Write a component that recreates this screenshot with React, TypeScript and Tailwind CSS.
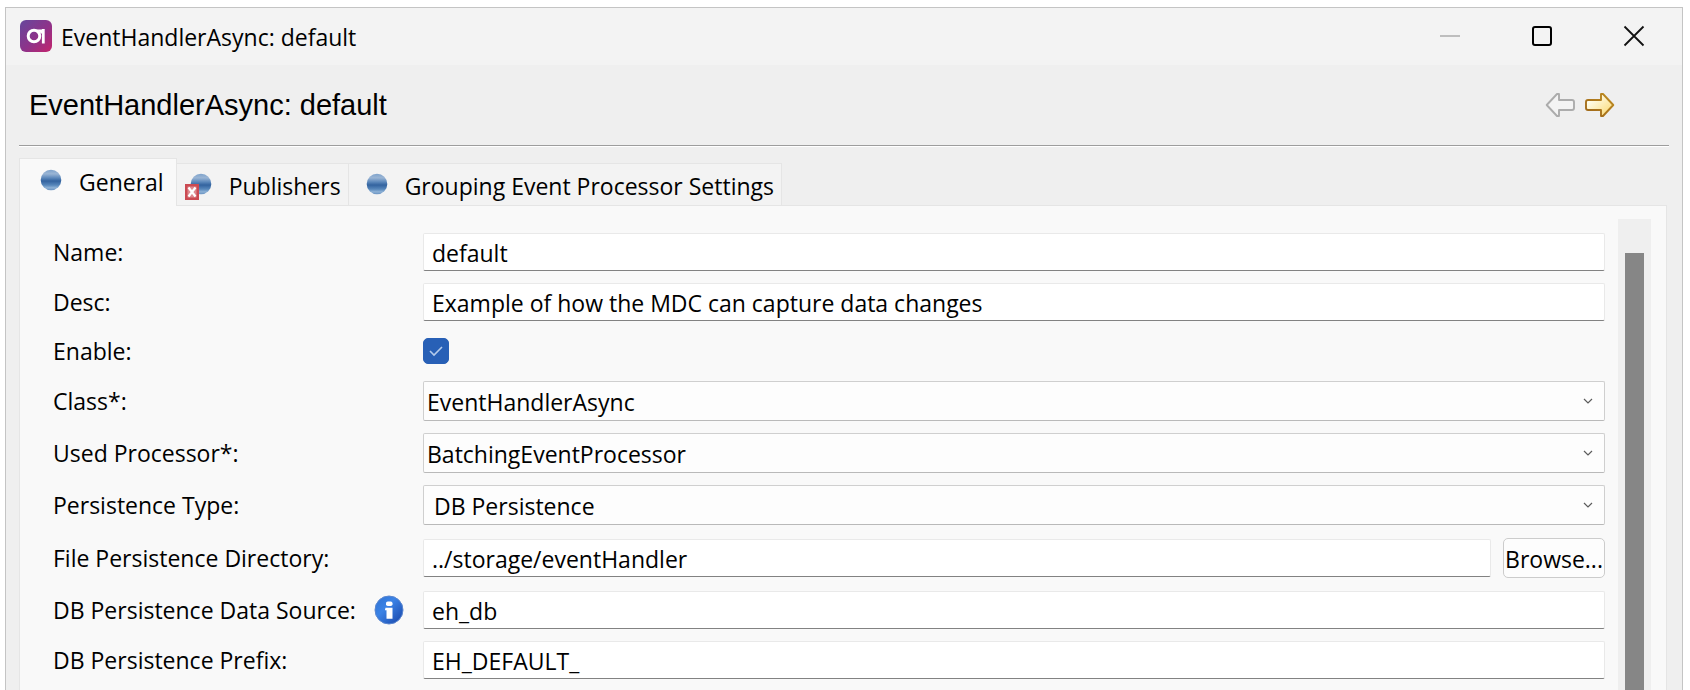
import { useState } from "react";
import type { ReactNode } from "react";

function AppLogo() {
  return (
    <svg width="32" height="32" viewBox="0 0 32 32" aria-hidden="true">
      <defs>
        <linearGradient id="logo" x1="0" y1="0" x2="1" y2="1">
          <stop offset="0" stopColor="#65489c" />
          <stop offset="0.55" stopColor="#8f3289" />
          <stop offset="1" stopColor="#c4246c" />
        </linearGradient>
      </defs>
      <rect width="32" height="32" rx="6" fill="url(#logo)" />
      <circle cx="14" cy="16" r="5.8" fill="none" stroke="#fff" strokeWidth="3" />
      <path d="M23.300 9v14.500" stroke="#fff" strokeWidth="2.800" />
      <path d="M17 9.500h6v4h-2z" fill="#fff" />
    </svg>
  );
}

function Ball({ error = false }: { error?: boolean }) {
  return (
    <svg width="28" height="28" viewBox="0 0 28 28" aria-hidden="true">
      <defs>
        <linearGradient id="ball" x1="0" y1="0" x2="0" y2="1">
          <stop offset="0" stopColor="#7fa3cb" />
          <stop offset="0.2" stopColor="#9ab5d5" />
          <stop offset="0.4" stopColor="#5c88bb" />
          <stop offset="0.55" stopColor="#33639f" />
          <stop offset="0.75" stopColor="#5787bb" />
          <stop offset="0.88" stopColor="#8fb2d6" />
          <stop offset="1" stopColor="#6690c0" />
        </linearGradient>
      </defs>
      <circle cx="16" cy="12" r="10.3" fill="url(#ball)" />
      {error && (
        <g>
          <rect x="0" y="12" width="14" height="16" fill="#cb4a52" />
          <rect x="2.500" y="14.500" width="9" height="11" fill="#dd8a90" />
          <path d="M3.500 15.500l7 9M10.500 15.500l-7 9" stroke="#fff" strokeWidth="2.200" />
        </g>
      )}
    </svg>
  );
}

function InfoIcon() {
  return (
    <svg width="30" height="30" viewBox="0 0 30 30" role="img" aria-label="Information">
      <defs>
        <linearGradient id="info" x1="0" y1="0" x2="1" y2="1">
          <stop offset="0" stopColor="#2f72d2" />
          <stop offset="0.4" stopColor="#3b83e6" />
          <stop offset="1" stopColor="#1642a6" />
        </linearGradient>
      </defs>
      <circle cx="15" cy="15" r="14" fill="url(#info)" stroke="#5a86cf" strokeWidth="1" />
      <rect x="12" y="6.5" width="6.500" height="4.600" rx="1.800" fill="#fff" />
      <path d="M11.500 12.800h7v11h-6v-8.600h-1.600z" fill="#fff" />
    </svg>
  );
}

function Arrow({ forward = false }: { forward?: boolean }) {
  return (
    <svg width="30" height="26" viewBox="0 0 30 26" aria-hidden="true">
      <defs>
        <linearGradient id="gold" x1="0" y1="0" x2="1" y2="1">
          <stop offset="0.2" stopColor="#fffef0" />
          <stop offset="0.8" stopColor="#fbe08a" />
        </linearGradient>
        <linearGradient id="goldEdge" x1="0" y1="1" x2="1" y2="0">
          <stop offset="0" stopColor="#9c6418" />
          <stop offset="1" stopColor="#c08e22" />
        </linearGradient>
      </defs>
      {forward ? (
        <path
          d="M3 8h13V2h2l10.300 11L18 24h-2v-6H3q-2 0-2-2v-6q0-2 2-2z"
          fill="url(#gold)"
          stroke="url(#goldEdge)"
          strokeWidth="1.9"
          strokeLinejoin="round"
        />
      ) : (
        <path
          d="M27 8H14V2h-2L1.700 13L12 24h2v-6h13q2 0 2-2v-6q0-2-2-2z"
          fill="#f4f4f4"
          stroke="#acacac"
          strokeWidth="1.900"
          strokeLinejoin="round"
        />
      )}
    </svg>
  );
}

function Row({
  id,
  label,
  height,
  info = false,
  children,
}: {
  id: string;
  label: string;
  height: string;
  info?: boolean;
  children: ReactNode;
}) {
  return (
    <div className={`flex items-center ${height}`}>
      <div className="flex w-[370px] shrink-0 items-center justify-between pr-[19px]">
        <label htmlFor={id} className="whitespace-nowrap">
          {label}
        </label>
        {info && <InfoIcon />}
      </div>
      <div className="flex min-w-0 flex-1 items-center gap-3">{children}</div>
    </div>
  );
}

function TextField({ id, value }: { id: string; value: string }) {
  return (
    <input
      id={id}
      type="text"
      defaultValue={value}
      className="h-[38px] min-w-0 flex-1 rounded-[2px] border border-[#e9e9e9] border-b-[#828282] bg-white px-2 pt-0.5 outline-none"
    />
  );
}

function SelectField({ id, value, padding }: { id: string; value: string; padding: string }) {
  return (
    <div className="relative min-w-0 flex-1">
      <select
        id={id}
        defaultValue={value}
        className={`block h-10 w-full appearance-none rounded-[2px] border border-[#cfcfcf] border-b-[#b9b9b9] bg-[#fdfdfd] pt-0.5 pr-10 outline-none ${padding}`}
      >
        <option>{value}</option>
      </select>
      <svg
        className="pointer-events-none absolute top-4 right-3"
        width="10"
        height="8"
        viewBox="0 0 10 8"
        fill="none"
        stroke="#5c5c5c"
        strokeWidth="1.2"
      >
        <path d="M1 2l4 4l4-4" />
      </svg>
    </div>
  );
}

export default function App() {
  const [enabled, setEnabled] = useState(true);
  return (
    <div className="h-screen overflow-hidden bg-white pt-[7px] pr-[7px] pl-[5px] font-['Open_Sans','Noto_Sans',sans-serif] text-[23px] leading-8 text-black">
      <main className="flex h-full flex-col border border-b-0 border-[#c4c4c4] bg-[#efefef]">
        <header className="flex h-[57px] shrink-0 items-center bg-[#f3f3f3] pr-[37px] pb-0.5 pl-[14px]">
          <AppLogo />
          <span className="flex-1 pt-0.5 pl-[9px]">EventHandlerAsync: default</span>
          <div className="flex gap-[70px]">
            <button type="button" aria-label="Minimize" disabled>
              <svg width="22" height="22" viewBox="0 0 22 22">
                <path d="M1 11h20" stroke="#bdbdbd" strokeWidth="2" />
              </svg>
            </button>
            <button type="button" aria-label="Maximize">
              <svg width="22" height="22" viewBox="0 0 22 22">
                <rect x="2" y="2" width="18" height="18" rx="2" fill="none" stroke="#000" strokeWidth="2" />
              </svg>
            </button>
            <button type="button" aria-label="Close">
              <svg width="22" height="22" viewBox="0 0 22 22">
                <path d="M1.500 1.500l19 19M20.500 1.500l-19 19" stroke="#111" strokeWidth="1.800" />
              </svg>
            </button>
          </div>
        </header>

        <div className="mr-[13px] ml-[13px] flex h-[81px] shrink-0 items-center justify-between border-b border-[#9d9d9d] pr-[54px] pl-2.5 shadow-[0_1px_0_#fff]">
          <h1 className="font-['Liberation_Sans',Arial,sans-serif] text-[29px]">EventHandlerAsync: default</h1>
          <div className="flex gap-2.5">
            <button type="button" aria-label="Back" disabled>
              <Arrow />
            </button>
            <button type="button" aria-label="Forward">
              <Arrow forward />
            </button>
          </div>
        </div>

        <div role="tablist" className="mt-3 ml-[13px] flex shrink-0 items-end">
          <button
            type="button"
            role="tab"
            aria-selected="true"
            className="z-10 -mb-px flex h-12 items-center gap-4 border border-b-0 border-[#e5e5e5] bg-[#f9f9f9] pr-3 pb-0.5 pl-[15px]"
          >
            <Ball />
            General
          </button>
          <button
            type="button"
            role="tab"
            aria-selected="false"
            className="flex h-[42px] items-center gap-4 border-t border-r border-[#e5e5e5] bg-[#f3f3f3] pt-0.5 pr-[7px] pl-2"
          >
            <Ball error />
            Publishers
          </button>
          <button
            type="button"
            role="tab"
            aria-selected="false"
            className="flex h-[42px] items-center gap-4 border-t border-r border-[#e5e5e5] bg-[#f3f3f3] pt-0.5 pr-[7px] pl-3"
          >
            <Ball />
            Grouping Event Processor Settings
          </button>
        </div>

        <section className="mr-[15px] ml-[13px] flex min-h-0 flex-1 border border-b-0 border-[#e5e5e5] bg-[#f9f9f9] pr-[15px]">
          <form className="flex min-w-0 flex-1 flex-col gap-3 pt-[27px] pr-[13px] pl-[33px]">
            <Row id="name" label="Name:" height="h-[38px]">
              <TextField id="name" value="default" />
            </Row>
            <Row id="desc" label="Desc:" height="h-[38px]">
              <TextField id="desc" value="Example of how the MDC can capture data changes" />
            </Row>
            <Row id="enable" label="Enable:" height="h-9">
              <div className="grid size-[26px] place-items-center">
                <input
                  id="enable"
                  type="checkbox"
                  checked={enabled}
                  onChange={(e) => setEnabled(e.target.checked)}
                  className="col-start-1 row-start-1 size-[26px] appearance-none rounded-[5px] border border-[#2860b6] bg-white checked:bg-[#2860b6]"
                />
                {enabled && (
                  <svg
                    className="pointer-events-none col-start-1 row-start-1"
                    width="14"
                    height="12"
                    viewBox="0 0 14 12"
                    fill="none"
                    stroke="#b4cbeb"
                    strokeWidth="1.6"
                  >
                    <path d="M1 6l4 4l8-8" />
                  </svg>
                )}
              </div>
            </Row>
            <Row id="class" label="Class*:" height="h-10">
              <SelectField id="class" value="EventHandlerAsync" padding="pl-[3px]" />
            </Row>
            <Row id="processor" label="Used Processor*:" height="h-10">
              <SelectField id="processor" value="BatchingEventProcessor" padding="pl-[3px]" />
            </Row>
            <Row id="persistence" label="Persistence Type:" height="h-10">
              <SelectField id="persistence" value="DB Persistence" padding="pl-[10px]" />
            </Row>
            <Row id="directory" label="File Persistence Directory:" height="h-[42px]">
              <TextField id="directory" value="../storage/eventHandler" />
              <button
                type="button"
                className="h-10 w-[102px] rounded-[5px] border border-[#cccccc] bg-[#fdfdfd] pt-0.5 text-center"
              >
                Browse...
              </button>
            </Row>
            <Row id="source" label="DB Persistence Data Source:" height="h-[38px]" info>
              <TextField id="source" value="eh_db" />
            </Row>
            <Row id="prefix" label="DB Persistence Prefix:" height="h-[38px]">
              <TextField id="prefix" value="EH_DEFAULT_" />
            </Row>
          </form>
          <div className="mt-[13px] flex w-[33px] shrink-0 justify-center bg-[#efefef] pt-[34px]">
            <div className="w-[19px] bg-[#868686]" />
          </div>
        </section>
      </main>
    </div>
  );
}
